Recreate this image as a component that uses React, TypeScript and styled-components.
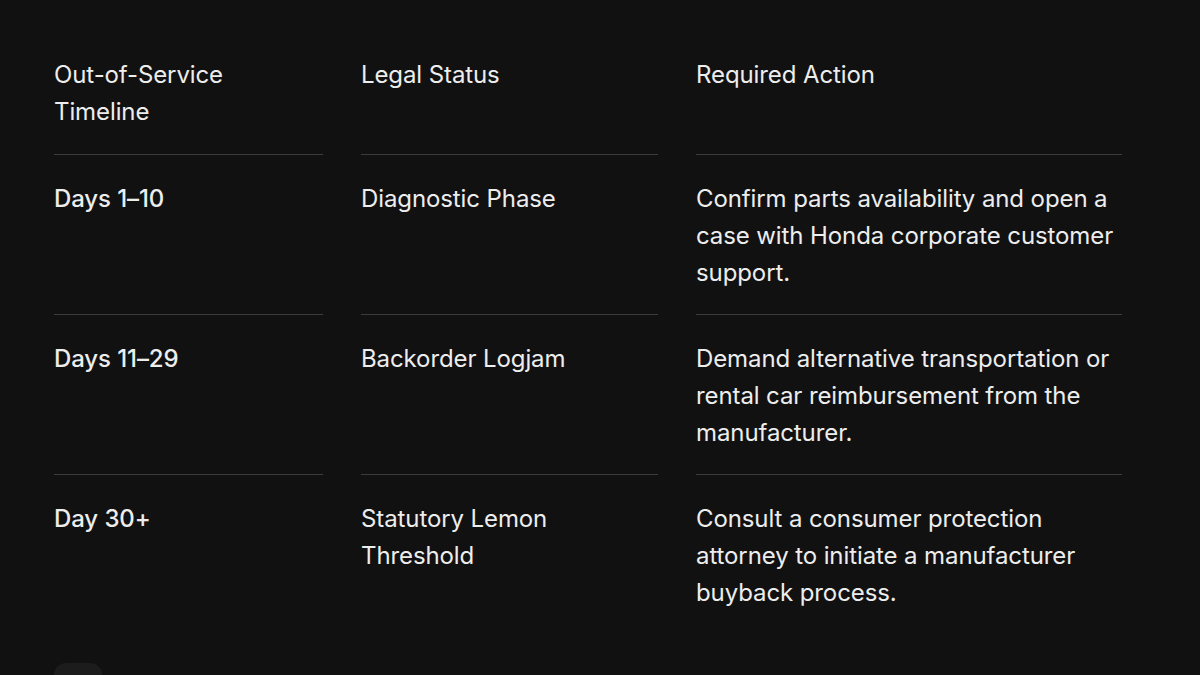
import React from "react";
import styled, { createGlobalStyle } from "styled-components";

const Global = createGlobalStyle`
  html, body { margin: 0; padding: 0; background: #111111; }
  body { font-family: Inter, "Open Sans", sans-serif; color: #ececec; }
`;

const Page = styled.div`
  width: 1200px;
  height: 675px;
  overflow: hidden;
  background: #111111;
  padding: 56px 78px 0 54px;
  box-sizing: border-box;
`;

const Table = styled.div`
  display: grid;
  grid-template-columns: 269px 297px 426px;
  column-gap: 38px;
`;

const Cell = styled.div<{ $head?: boolean; $strong?: boolean; $last?: boolean }>`
  font-size: 24px;
  line-height: 37px;
  letter-spacing: -0.1px;
  font-weight: ${(p) => (p.$strong ? 500 : 400)};
  color: #ededed;
  padding: ${(p) => (p.$head ? "0 0 24px" : "25px 0 23px")};
  border-bottom: ${(p) => (p.$last ? "none" : "1px solid #3c3c3c")};
  min-height: ${(p) => (p.$head ? "74px" : "111px")};
`;

const Chip = styled.div`
  margin-top: 29px;
  width: 48px;
  height: 30px;
  border-radius: 12px;
  background: #1c1c1c;
`;

const rows = [
  {
    t: "Days 1–10",
    s: "Diagnostic Phase",
    a: "Confirm parts availability and open a case with Honda corporate customer support.",
  },
  {
    t: "Days 11–29",
    s: "Backorder Logjam",
    a: "Demand alternative transportation or rental car reimbursement from the manufacturer.",
  },
  {
    t: "Day 30+",
    s: "Statutory Lemon Threshold",
    a: "Consult a consumer protection attorney to initiate a manufacturer buyback process.",
  },
];

export default function App() {
  return (
    <>
      <Global />
      <Page>
        <Table>
          <Cell $head>Out-of-Service Timeline</Cell>
          <Cell $head>Legal Status</Cell>
          <Cell $head>Required Action</Cell>
          {rows.map((r, i) => (
            <React.Fragment key={r.t}>
              <Cell $strong $last={i === rows.length - 1}>{r.t}</Cell>
              <Cell $last={i === rows.length - 1}>{r.s}</Cell>
              <Cell $last={i === rows.length - 1}>{r.a}</Cell>
            </React.Fragment>
          ))}
        </Table>
        <Chip />
      </Page>
    </>
  );
}
